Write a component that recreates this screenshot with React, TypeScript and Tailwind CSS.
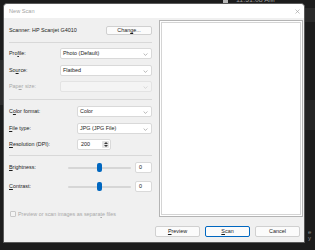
import React from 'react';

type ComboProps = { value?: string; disabled?: boolean; width: string };

const Chevron = ({ color }: { color: string }) => (
  <svg className="absolute right-[3px] top-[4px]" width="5" height="3" viewBox="0 0 5 3">
    <path d="M0.6 0.5 L2.5 2.4 L4.4 0.5" fill="none" stroke={color} strokeWidth="0.6" />
  </svg>
);

const Combo = ({ value, disabled, width }: ComboProps) => (
  <div
    className={
      disabled
        ? `relative h-[11px] ${width} rounded-[2px] border border-[#e3e3e3] bg-[#f4f4f4]`
        : `relative h-[11px] ${width} rounded-[2px] border border-[#d9d9d9] bg-white flex items-center pl-[2px] text-[#1b1b1b]`
    }
  >
    {value && <span className="leading-none">{value}</span>}
    <Chevron color={disabled ? '#c4c4c4' : '#8a8a8a'} />
  </div>
);

const Separator = ({ mt }: { mt: string }) => <div className={`${mt} h-px bg-[#d8d8d8]`} />;

const SliderRow = ({ label, mt }: { label: React.ReactNode; mt: string }) => (
  <div className={`${mt} flex items-center h-[11px]`}>
    <span className="w-[59px] text-[#1b1b1b]">{label}</span>
    <div className="relative w-[63px] h-[9px] flex items-center">
      <div className="w-full h-[2px] rounded-full bg-[#d6d6d6]" />
      <div className="absolute left-[29px] top-0 w-[5px] h-[9px] rounded-[2px] bg-[#0067c0]" />
    </div>
    <div className="ml-[4px] w-[17px] h-[11px] rounded-[2px] border border-[#d9d9d9] bg-white flex items-center pl-[3px] text-[#1b1b1b]">
      0
    </div>
  </div>
);

export default function App() {
  return (
    <div className="relative w-[315px] h-[250px] overflow-hidden bg-[#1c1c1c] font-['Liberation_Sans',Arial,sans-serif] text-[5.4px]">
      {/* desktop behind the dialog */}
      <div className="absolute left-[223px] top-0 w-[5px] h-[3px] bg-[#b8b8b8]" />
      <div className="absolute left-[236px] top-[-4px] text-[7px] text-[#9a9a9a] leading-none">11:51:08 AM</div>
      <div className="absolute left-[305px] top-[8px] w-[10px] h-[14px] bg-[#2a2a2a]" />
      <div className="absolute left-[305px] top-[100px] w-[10px] h-[30px] bg-[#262626]" />
      <div className="absolute left-[308px] top-[229px] text-[6px] text-[#8a8a8a] leading-none">e y</div>
      <div className="absolute left-0 top-[60px] w-[3px] h-[45px] bg-[#2c2c2c]" />

      {/* dialog window */}
      <div className="absolute left-[3px] top-[3px] w-[302px] h-[240px] rounded-t-[4px] bg-[#f0f0f0] border border-[#5a5a5a] flex flex-col">
        <div className="h-[14px] bg-white rounded-t-[4px] flex items-center justify-between pl-[5px] pr-[4px] text-[#a3a3a3] text-[5.6px]">
          <span>New Scan</span>
          <svg width="5" height="5" viewBox="0 0 5 5">
            <path d="M0.5 0.5 L4.5 4.5 M4.5 0.5 L0.5 4.5" stroke="#9a9a9a" strokeWidth="0.6" />
          </svg>
        </div>

        <div className="flex pl-[5px] pr-[1px] pt-[2px]">
          {/* left settings column */}
          <div className="w-[143px] flex flex-col">
            <div className="mt-[6px] h-[9px] flex items-center justify-between text-[#1b1b1b]">
              <span>Scanner: HP Scanjet G4010</span>
              <div className="w-[46px] h-[9px] rounded-[2px] border border-[#d0d0d0] bg-[#fbfbfb] flex items-center justify-center">
                <span>Chan<u>g</u>e...</span>
              </div>
            </div>

            <Separator mt="mt-[7px]" />

            <div className="mt-[5px] flex items-center">
              <span className="w-[51px] text-[#1b1b1b]">Pro<u>f</u>ile:</span>
              <Combo value="Photo (Default)" width="w-[92px]" />
            </div>
            <div className="mt-[6px] flex items-center">
              <span className="w-[51px] text-[#1b1b1b]">So<u>u</u>rce:</span>
              <Combo value="Flatbed" width="w-[92px]" />
            </div>
            <div className="mt-[5px] flex items-center">
              <span className="w-[51px] text-[#a8a8a8]">Pap<u>e</u>r size:</span>
              <Combo disabled width="w-[92px]" />
            </div>

            <Separator mt="mt-[7px]" />

            <div className="mt-[6px] flex items-center">
              <span className="w-[68px] text-[#1b1b1b]">C<u>o</u>lor format:</span>
              <Combo value="Color" width="w-[75px]" />
            </div>
            <div className="mt-[6px] flex items-center">
              <span className="w-[68px] text-[#1b1b1b]"><u>F</u>ile type:</span>
              <Combo value="JPG (JPG File)" width="w-[75px]" />
            </div>
            <div className="mt-[5px] flex items-center">
              <span className="w-[68px] text-[#1b1b1b]"><u>R</u>esolution (DPI):</span>
              <div className="relative w-[34px] h-[11px] rounded-[2px] border border-[#d9d9d9] bg-white flex items-center pl-[3px] text-[#1b1b1b]">
                <span>200</span>
                <div className="absolute right-[1px] top-[1px] w-[7px] h-[7px] rounded-[1px] bg-[#e4e4e4] flex flex-col items-center justify-center gap-[1px]">
                  <svg width="4" height="2" viewBox="0 0 4 2"><path d="M0 2 L2 0 L4 2 Z" fill="#3a3a3a" /></svg>
                  <svg width="4" height="2" viewBox="0 0 4 2"><path d="M0 0 L2 2 L4 0 Z" fill="#3a3a3a" /></svg>
                </div>
              </div>
            </div>

            <Separator mt="mt-[5px]" />

            <SliderRow mt="mt-[6px]" label={<><u>B</u>rightness:</>} />
            <SliderRow mt="mt-[8px]" label={<><u>C</u>ontrast:</>} />

            <div className="mt-[19px] h-[6px] flex items-center gap-[2px] pl-[1px] text-[#a8a8a8]">
              <div className="w-[6px] h-[6px] rounded-[1px] border border-[#c8c8c8] bg-[#f4f4f4]" />
              <span>Preview or scan images as separa<u>t</u>e files</span>
            </div>
          </div>

          {/* preview pane */}
          <div className="ml-[7px] flex-1 h-[197px] border border-[#b4b4b4] p-px bg-white">
            <div className="w-full h-full border border-[#d4d4d4] bg-white" />
          </div>
        </div>

        <div className="mt-[9px] flex justify-end gap-[5px] pr-[4px] text-[#1b1b1b]">
          <div className="w-[45px] h-[11px] rounded-[2px] border border-[#d0d0d0] bg-[#fbfbfb] flex items-center justify-center">
            <span><u>P</u>review</span>
          </div>
          <div className="w-[45px] h-[11px] rounded-[2px] border border-[#0067c0] bg-[#fbfbfb] flex items-center justify-center">
            <span><u>S</u>can</span>
          </div>
          <div className="w-[45px] h-[11px] rounded-[2px] border border-[#d0d0d0] bg-[#fbfbfb] flex items-center justify-center">
            <span>Cancel</span>
          </div>
        </div>
      </div>
    </div>
  );
}
